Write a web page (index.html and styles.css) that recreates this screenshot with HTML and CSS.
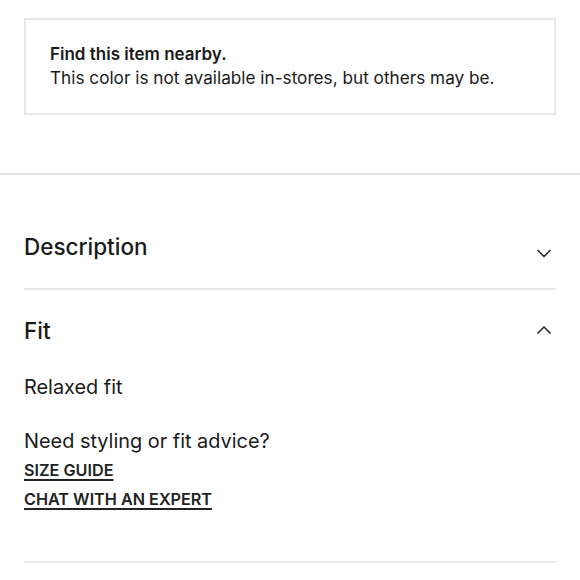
FILE: index.html
```html
<!DOCTYPE html>
<html>
<head>
<meta charset="utf-8">
<link rel="stylesheet" href="styles.css">
</head>
<body>
<div class="top">
  <div class="nearby">
    <div class="nearby-title">Find this item nearby.</div>
    <div class="nearby-text">This color is not available in-stores, but others may be.</div>
  </div>
</div>
<div class="accordion">
  <div class="acc-item">
    <div class="acc-head">
      <span class="acc-title">Description</span>
      <svg class="chev" width="16" height="10" viewBox="0 0 16 10"><path d="M1.5 2 L8 8.5 L14.5 2" fill="none" stroke="#222" stroke-width="1.5"/></svg>
    </div>
  </div>
  <div class="acc-item open">
    <div class="acc-head">
      <span class="acc-title">Fit</span>
      <svg class="chev" width="16" height="10" viewBox="0 0 16 10"><path d="M1.5 8.5 L8 2 L14.5 8.5" fill="none" stroke="#222" stroke-width="1.5"/></svg>
    </div>
    <div class="acc-body">
      <p class="fit">Relaxed fit</p>
      <p class="advice">Need styling or fit advice?</p>
      <a class="link first" href="#">SIZE GUIDE</a>
      <a class="link" href="#">CHAT WITH AN EXPERT</a>
    </div>
  </div>
</div>
</body>
</html>
```
FILE: styles.css
```css
* { box-sizing: border-box; }
body {
  margin: 0;
  background: #fff;
  font-family: Inter, "Noto Sans", sans-serif;
  color: #1a1a1a;
  width: 580px;
}
.top {
  padding: 18px 24px 58px;
  border-bottom: 2px solid #e3e3e3;
}
.nearby {
  border: 2px solid #e8e8e8;
  height: 97px;
  padding: 23px 24px 21px;
}
.nearby-title {
  font-weight: 600;
  font-size: 17px;
  line-height: 23px;
}
.nearby-text {
  font-size: 17.2px;
  line-height: 23px;
}
.accordion {
  padding: 0 24px;
}
.acc-item {
  border-bottom: 2px solid #e8e8e8;
}
.acc-head {
  display: flex;
  justify-content: space-between;
  align-items: center;
}
.acc-item:first-child .acc-head {
  height: 113px;
  padding-top: 30px;
}
.acc-item:first-child .chev { margin-top: 12px; }
.acc-item.open .acc-head {
  height: 80px;
}
.acc-item.open .chev { margin-top: -1px; }
.acc-title {
  font-size: 22.5px;
  font-weight: 500;
}
.chev { margin-right: 4px; }
.acc-body {
  padding: 0 0 47px;
}
.fit, .advice {
  margin: 0;
  font-size: 19.9px;
  line-height: 26px;
}
.fit { margin-top: 4px; margin-bottom: 28px; }
.link {
  display: block;
  width: max-content;
  font-size: 16.2px;
  font-weight: 600;
  color: #222;
  text-decoration: underline;
  text-underline-offset: 3px;
  text-decoration-thickness: 1.5px;
  line-height: 29px;
}
.link.first { margin-top: 2px; }
```
